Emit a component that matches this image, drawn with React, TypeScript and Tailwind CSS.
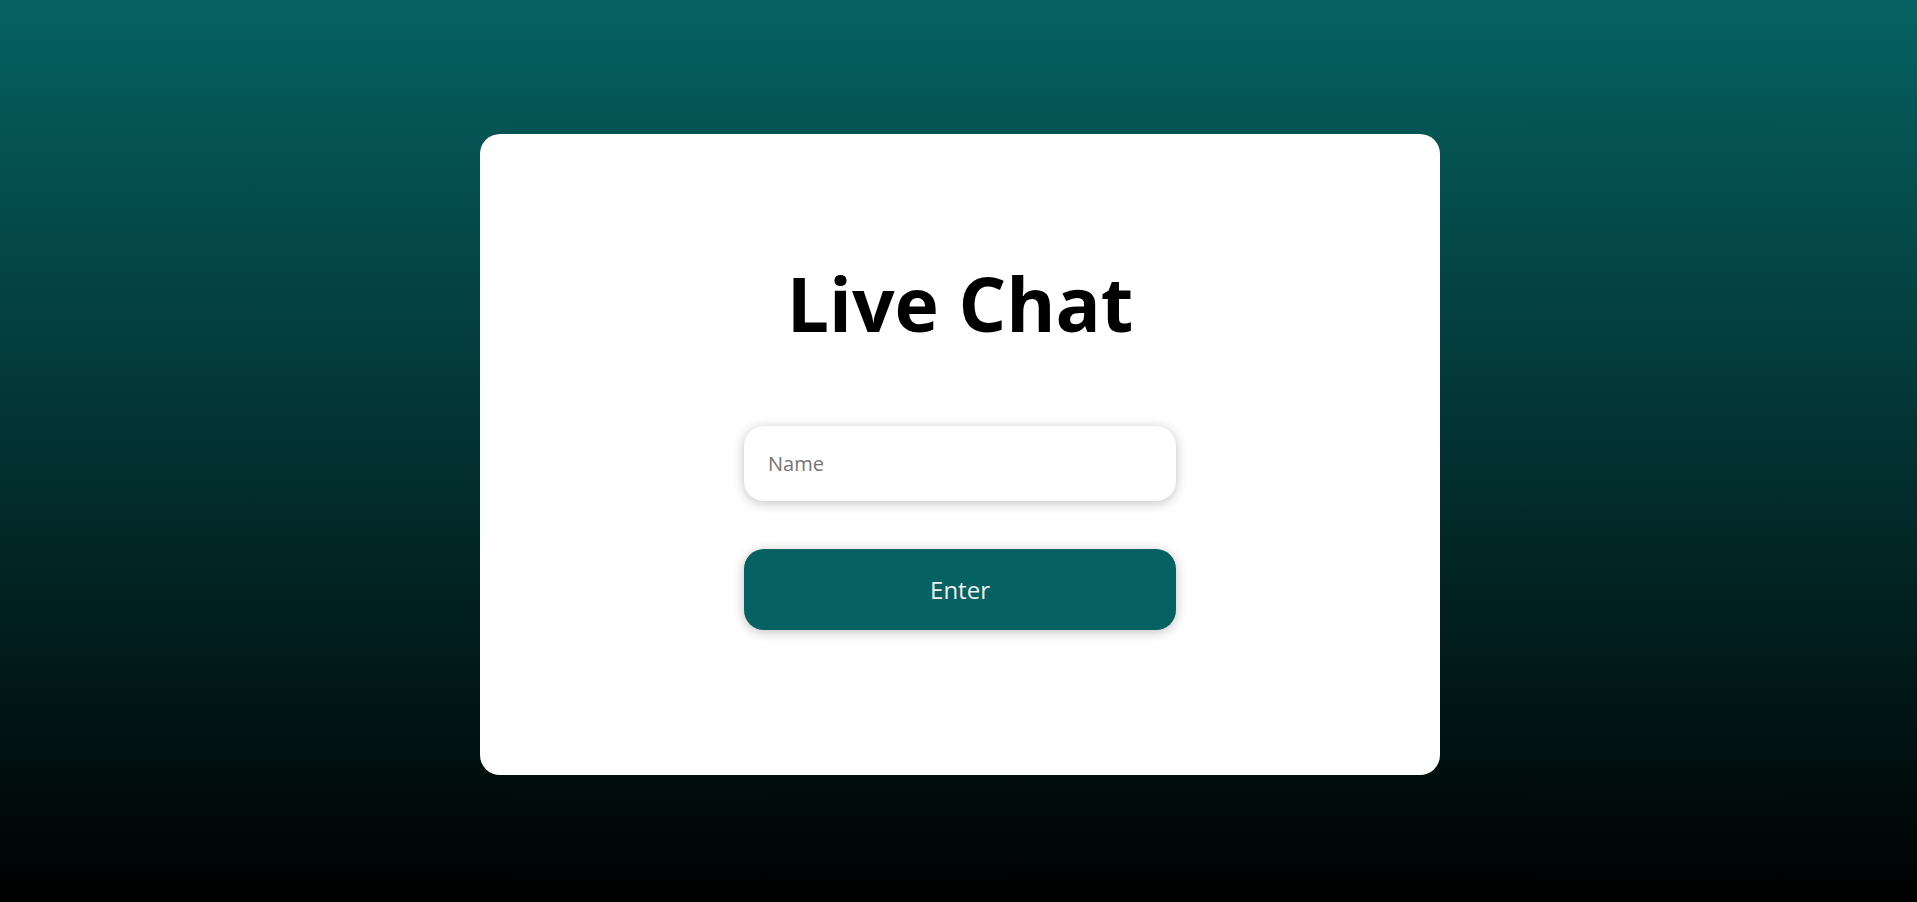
import { useState } from "react";

function App() {
  const [name, setName] = useState("");

  return (
    <div
      className="min-h-screen w-full flex items-center justify-center pt-[7px] pl-[3px] bg-[linear-gradient(to_bottom,#066262,#000000)]"
      style={{ fontFamily: "'Open Sans', 'Noto Sans', sans-serif" }}
    >
      <div className="w-[960px] h-[641px] bg-white rounded-[20px] flex flex-col items-center pt-[118px]">
        <h1 className="text-[75px] font-bold text-black leading-[102px]">Live Chat</h1>

        <input
          value={name}
          onChange={(e) => setName(e.target.value)}
          placeholder="Name"
          className="mt-[72px] w-[432px] h-[75px] rounded-[20px] bg-white px-6 text-[20px] text-[#222] placeholder:text-[#757575] outline-none shadow-[0_2px_12px_rgba(0,0,0,0.25)]"
        />

        <button className="mt-[48px] w-[432px] h-[81px] rounded-[20px] bg-[#066262] text-[24px] text-[#f0f0f0] shadow-[0_2px_12px_rgba(0,0,0,0.25)]">
          Enter
        </button>
      </div>
    </div>
  );
}

export default App;
